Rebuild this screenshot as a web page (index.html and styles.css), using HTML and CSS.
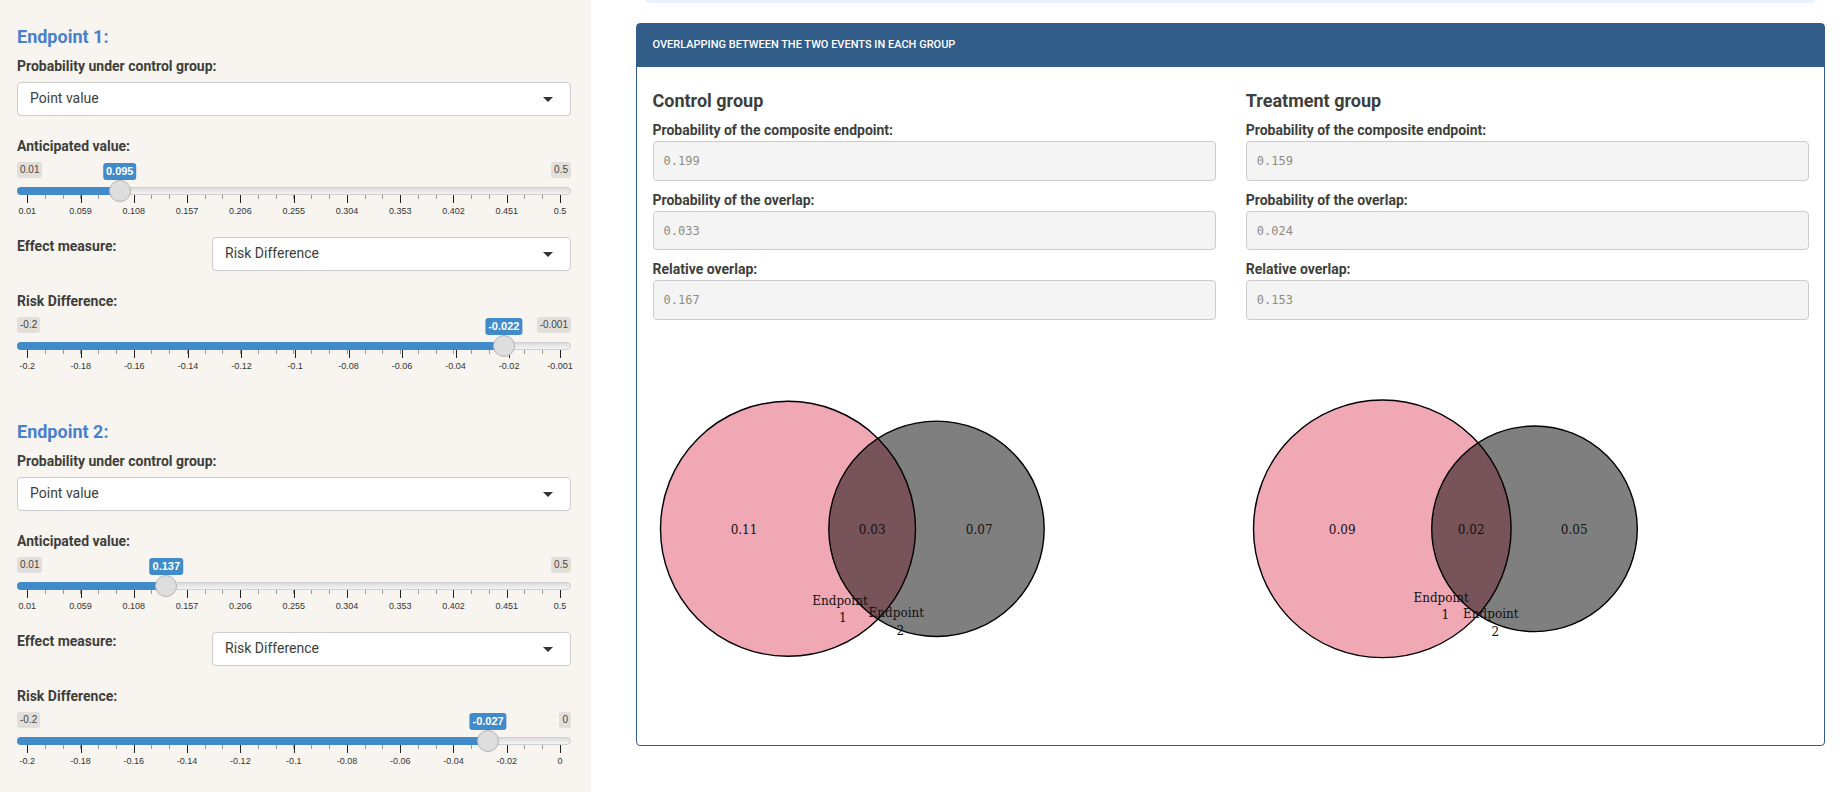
FILE: index.html
```html
<!DOCTYPE html>
<html lang="en">
<head>
    <meta charset="UTF-8">
    <meta name="viewport" content="width=device-width, initial-scale=1.0">
    <title>Overlapping events</title>
    <link rel="stylesheet" href="styles.css">
</head>
<body>

    <aside class="sidebar">

        <section class="endpoint">
            <h4>Endpoint 1:</h4>
            <label class="label-top">Probability under control group:</label>
            <div class="select">Point value</div>

            <label class="label-gap">Anticipated value:</label>
            <div class="slider" style="--v:17.35%">
                <div class="ends"><span>0.01</span><span>0.5</span></div>
                <div class="track"><div class="rail"><span class="fill"></span><span class="thumb"></span><span class="value">0.095</span></div></div>
                <div class="scale">
                    <div class="tick" style="left:0%"><span>0.01</span></div>
                    <div class="tick" style="left:10%"><span>0.059</span></div>
                    <div class="tick" style="left:20%"><span>0.108</span></div>
                    <div class="tick" style="left:30%"><span>0.157</span></div>
                    <div class="tick" style="left:40%"><span>0.206</span></div>
                    <div class="tick" style="left:50%"><span>0.255</span></div>
                    <div class="tick" style="left:60%"><span>0.304</span></div>
                    <div class="tick" style="left:70%"><span>0.353</span></div>
                    <div class="tick" style="left:80%"><span>0.402</span></div>
                    <div class="tick" style="left:90%"><span>0.451</span></div>
                    <div class="tick" style="left:100%"><span>0.5</span></div>
                </div>
            </div>

            <div class="effect">
                <label>Effect measure:</label>
                <div class="select">Risk Difference</div>
            </div>

            <label class="label-gap">Risk Difference:</label>
            <div class="slider" style="--v:89.45%">
                <div class="ends"><span>-0.2</span><span>-0.001</span></div>
                <div class="track"><div class="rail"><span class="fill"></span><span class="thumb"></span><span class="value">-0.022</span></div></div>
                <div class="scale">
                    <div class="tick" style="left:0%"><span>-0.2</span></div>
                    <div class="tick" style="left:10.05%"><span>-0.18</span></div>
                    <div class="tick" style="left:20.1%"><span>-0.16</span></div>
                    <div class="tick" style="left:30.15%"><span>-0.14</span></div>
                    <div class="tick" style="left:40.2%"><span>-0.12</span></div>
                    <div class="tick" style="left:50.25%"><span>-0.1</span></div>
                    <div class="tick" style="left:60.3%"><span>-0.08</span></div>
                    <div class="tick" style="left:70.35%"><span>-0.06</span></div>
                    <div class="tick" style="left:80.4%"><span>-0.04</span></div>
                    <div class="tick" style="left:90.45%"><span>-0.02</span></div>
                    <div class="tick" style="left:100%"><span>-0.001</span></div>
                </div>
            </div>
        </section>

        <section class="endpoint">
            <h4>Endpoint 2:</h4>
            <label class="label-top">Probability under control group:</label>
            <div class="select">Point value</div>

            <label class="label-gap">Anticipated value:</label>
            <div class="slider" style="--v:26.1%">
                <div class="ends"><span>0.01</span><span>0.5</span></div>
                <div class="track"><div class="rail"><span class="fill"></span><span class="thumb"></span><span class="value">0.137</span></div></div>
                <div class="scale">
                    <div class="tick" style="left:0%"><span>0.01</span></div>
                    <div class="tick" style="left:10%"><span>0.059</span></div>
                    <div class="tick" style="left:20%"><span>0.108</span></div>
                    <div class="tick" style="left:30%"><span>0.157</span></div>
                    <div class="tick" style="left:40%"><span>0.206</span></div>
                    <div class="tick" style="left:50%"><span>0.255</span></div>
                    <div class="tick" style="left:60%"><span>0.304</span></div>
                    <div class="tick" style="left:70%"><span>0.353</span></div>
                    <div class="tick" style="left:80%"><span>0.402</span></div>
                    <div class="tick" style="left:90%"><span>0.451</span></div>
                    <div class="tick" style="left:100%"><span>0.5</span></div>
                </div>
            </div>

            <div class="effect">
                <label>Effect measure:</label>
                <div class="select">Risk Difference</div>
            </div>

            <label class="label-gap">Risk Difference:</label>
            <div class="slider" style="--v:86.5%">
                <div class="ends"><span>-0.2</span><span>0</span></div>
                <div class="track"><div class="rail"><span class="fill"></span><span class="thumb"></span><span class="value">-0.027</span></div></div>
                <div class="scale">
                    <div class="tick" style="left:0%"><span>-0.2</span></div>
                    <div class="tick" style="left:10%"><span>-0.18</span></div>
                    <div class="tick" style="left:20%"><span>-0.16</span></div>
                    <div class="tick" style="left:30%"><span>-0.14</span></div>
                    <div class="tick" style="left:40%"><span>-0.12</span></div>
                    <div class="tick" style="left:50%"><span>-0.1</span></div>
                    <div class="tick" style="left:60%"><span>-0.08</span></div>
                    <div class="tick" style="left:70%"><span>-0.06</span></div>
                    <div class="tick" style="left:80%"><span>-0.04</span></div>
                    <div class="tick" style="left:90%"><span>-0.02</span></div>
                    <div class="tick" style="left:100%"><span>0</span></div>
                </div>
            </div>
        </section>

    </aside>

    <main class="content">
        <div class="top-well"></div>

        <div class="card">
            <div class="card-header">Overlapping between the two events in each group</div>
            <div class="card-body">

                <div class="group">
                    <h4>Control group</h4>
                    <label>Probability of the composite endpoint:</label>
                    <div class="output">0.199</div>
                    <label>Probability of the overlap:</label>
                    <div class="output">0.033</div>
                    <label>Relative overlap:</label>
                    <div class="output">0.167</div>

                    <svg class="venn" width="500" height="340">
                        <circle class="set-a" cx="135" cy="179.8" r="127.5"/>
                        <circle class="set-b" cx="283.5" cy="179.8" r="107.7"/>
                        <text x="91" y="184.5">0.11</text>
                        <text x="219.2" y="184.5">0.03</text>
                        <text x="326.2" y="184.5">0.07</text>
                        <text x="187" y="256">Endpoint</text>
                        <text x="189.8" y="272.7">1</text>
                        <text x="243.3" y="268">Endpoint</text>
                        <text x="247.2" y="286">2</text>
                    </svg>
                </div>

                <div class="group">
                    <h4>Treatment group</h4>
                    <label>Probability of the composite endpoint:</label>
                    <div class="output">0.159</div>
                    <label>Probability of the overlap:</label>
                    <div class="output">0.024</div>
                    <label>Relative overlap:</label>
                    <div class="output">0.153</div>

                    <svg class="venn" width="500" height="340">
                        <circle class="set-a" cx="136.3" cy="179.8" r="128.8"/>
                        <circle class="set-b" cx="288.5" cy="179.8" r="102.8"/>
                        <text x="96.2" y="184.5">0.09</text>
                        <text x="225.2" y="184.5">0.02</text>
                        <text x="328.2" y="184.5">0.05</text>
                        <text x="195.2" y="253.3">Endpoint</text>
                        <text x="199.2" y="270">1</text>
                        <text x="244.8" y="269.3">Endpoint</text>
                        <text x="249.2" y="287.3">2</text>
                    </svg>
                </div>

            </div>
        </div>
    </main>

</body>
</html>
```

FILE: styles.css
```css
* {
    box-sizing: border-box;
}
body {
    font-family: Roboto, "Liberation Sans", sans-serif;
    margin: 0;
    min-height: 100vh;
    color: #3e3f3a;
    background-color: #fff;
    display: flex;
    overflow: hidden;
}
label {
    display: block;
    font-size: 14px;
    font-weight: 700;
    line-height: 20px;
}

/* sidebar */
.sidebar {
    width: 591px;
    flex-shrink: 0;
    padding: 26px 20px 0 17px;
    background-color: #f8f5f0;
}
.endpoint {
    height: 395px;
}
.endpoint h4 {
    margin: 0;
    font-size: 18px;
    font-weight: 700;
    line-height: 22px;
    color: #4a7fc9;
}
.label-top {
    margin-top: 8px;
    margin-bottom: 6px;
}
.label-gap {
    margin-top: 20px;
}
.select {
    position: relative;
    height: 34px;
    padding-left: 12px;
    font-size: 14px;
    line-height: 30px;
    background-color: #fff;
    border: 1px solid #ccc;
    border-radius: 4px;
}
.select::after {
    content: "";
    position: absolute;
    top: 14px;
    right: 17px;
    border-style: solid;
    border-width: 5px 5px 0;
    border-color: #333 transparent transparent;
}
.effect {
    display: flex;
    justify-content: space-between;
    margin-top: 10px;
}
.effect .select {
    width: 359px;
    margin-top: 1px;
}

/* range slider */
.slider {
    font-family: "Liberation Sans", Arial, sans-serif;
}
.ends {
    display: flex;
    justify-content: space-between;
    margin-top: 6px;
}
.ends span {
    height: 16px;
    padding: 0 3px;
    font-size: 10px;
    line-height: 16px;
    color: #444;
    background-color: #e2dfda;
    border-radius: 3px;
}
.track {
    position: relative;
    z-index: 1;
    height: 8px;
    margin-top: 9px;
    padding: 0 10px 0 9.3px;
    background: linear-gradient(#dcdcdc, #f4f4f4);
    border: 1px solid #cfcfcf;
    border-radius: 4px;
}
.rail {
    position: relative;
    height: 100%;
}
.fill {
    position: absolute;
    top: -1px;
    bottom: -1px;
    left: -10.3px;
    width: calc(var(--v) + 10.3px);
    background-color: #428bca;
    border-radius: 4px 0 0 4px;
}
.thumb {
    position: absolute;
    top: 50%;
    left: var(--v);
    width: 22px;
    height: 22px;
    background-color: #dedede;
    border: 1px solid #b4b4b4;
    border-radius: 50%;
    transform: translate(-50%, -50%);
}
.value {
    position: absolute;
    bottom: calc(100% + 8px);
    left: var(--v);
    height: 17px;
    padding: 0 3px;
    font-size: 11px;
    font-weight: 700;
    line-height: 17px;
    color: #fff;
    background-color: #428bca;
    border-radius: 3px;
    transform: translateX(-50%);
}
.scale {
    position: relative;
    height: 31px;
    margin: 0 11px 0 10.3px;
    background: repeating-linear-gradient(90deg, #999 0 1px, transparent 1px calc(100% / 30)) no-repeat;
    background-size: 100% 4px;
}
.tick {
    position: absolute;
    top: 0;
    width: 1px;
    height: 8px;
    background-color: #222;
}
.tick span {
    position: absolute;
    top: 11px;
    left: 0;
    font-size: 9px;
    line-height: 11px;
    color: #333;
    transform: translateX(-50%);
}

/* main panel */
.content {
    flex: 1;
    padding: 0 15px 0 45px;
}
.top-well {
    height: 3px;
    margin: 0 10px 20px 9px;
    background-color: #e8f3ff;
    border-radius: 0 0 10px 10px;
}
.card {
    height: 723px;
    border: 1px solid #325d88;
    border-radius: 4px;
}
.card-header {
    height: 43px;
    padding-left: 15.5px;
    font-size: 11px;
    font-weight: 500;
    line-height: 42px;
    color: #fff;
    text-transform: uppercase;
    background-color: #325d88;
}
.card-body {
    display: grid;
    grid-template-columns: 1fr 1fr;
    gap: 30px;
    padding: 23px 15px 0 15.5px;
}
.group h4 {
    margin: 0 0 8px;
    font-size: 18px;
    font-weight: 700;
    line-height: 22px;
}
.group label {
    margin-bottom: 1px;
}
.output {
    height: 39.5px;
    margin-bottom: 9px;
    padding-left: 10px;
    font-family: "DejaVu Sans Mono", monospace;
    font-size: 12px;
    line-height: 39px;
    color: #8e8c84;
    background-color: #f4f4f4;
    border: 1px solid #ccc;
    border-radius: 4px;
}

/* venn diagrams */
.venn {
    display: block;
    margin-top: 29px;
}
.venn circle {
    stroke: #000;
    stroke-width: 1.4;
}
.set-a {
    fill: #f0a8b4;
}
.set-b {
    fill: rgba(0, 0, 0, 0.5);
}
.venn text {
    font-family: "DejaVu Serif", serif;
    font-size: 12px;
    text-anchor: middle;
    fill: #111;
}
```
